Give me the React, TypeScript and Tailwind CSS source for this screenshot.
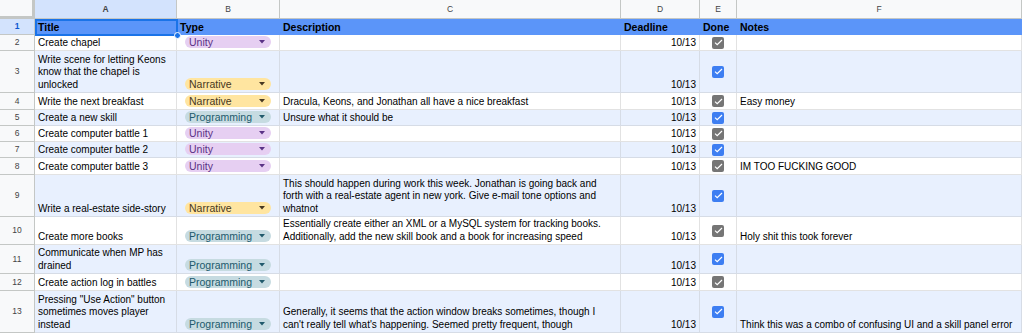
const rows = [
  { n: 2, title: 'Create chapel', type: 'Unity', desc: '', notes: '' },
  { n: 3, title: 'Write scene for letting Keons know that the chapel is unlocked', type: 'Narrative', desc: '', notes: '' },
  { n: 4, title: 'Write the next breakfast', type: 'Narrative', desc: 'Dracula, Keons, and Jonathan all have a nice breakfast', notes: 'Easy money' },
  { n: 5, title: 'Create a new skill', type: 'Programming', desc: 'Unsure what it should be', notes: '' },
  { n: 6, title: 'Create computer battle 1', type: 'Unity', desc: '', notes: '' },
  { n: 7, title: 'Create computer battle 2', type: 'Unity', desc: '', notes: '' },
  { n: 8, title: 'Create computer battle 3', type: 'Unity', desc: '', notes: 'IM TOO FUCKING GOOD' },
  {
    n: 9,
    title: 'Write a real-estate side-story',
    type: 'Narrative',
    desc: 'This should happen during work this week. Jonathan is going back and forth with a real-estate agent in new york. Give e-mail tone options and whatnot',
    notes: '',
  },
  {
    n: 10,
    title: 'Create more books',
    type: 'Programming',
    desc: 'Essentially create either an XML or a MySQL system for tracking books. Additionally, add the new skill book and a book for increasing speed',
    notes: 'Holy shit this took forever',
  },
  { n: 11, title: 'Communicate when MP has drained', type: 'Programming', desc: '', notes: '' },
  { n: 12, title: 'Create action log in battles', type: 'Programming', desc: '', notes: '' },
  {
    n: 13,
    title: 'Pressing "Use Action" button sometimes moves player instead',
    type: 'Programming',
    desc: "Generally, it seems that the action window breaks sometimes, though I can't really tell what's happening. Seemed pretty frequent, though",
    notes: 'Think this was a combo of confusing UI and a skill panel error',
  },
]

const chipStyles: Record<string, string> = {
  Unity: 'bg-[#e6cff2] text-[#5a3286]',
  Narrative: 'bg-[#ffe5a0] text-[#473821]',
  Programming: 'bg-[#c6dbe1] text-[#215a6c]',
}

function Chip({ type }: { type: string }) {
  return (
    <div className={`flex items-center justify-between h-[12px] rounded-full mx-[8px] mb-[2px] pl-[4px] pr-[6px] ${chipStyles[type]}`}>
      <span className="leading-[12px] text-[10.5px]">{type}</span>
      <svg width="6" height="4" viewBox="0 0 6 4" className="shrink-0">
        <path d="M0 0h6L3 3.5z" fill="currentColor" />
      </svg>
    </div>
  )
}

function Check({ blue }: { blue: boolean }) {
  return (
    <div className={`w-[12px] h-[12px] rounded-[2px] flex items-center justify-center ${blue ? 'bg-[#3d7ef2]' : 'bg-[#757575]'}`}>
      <svg width="9" height="7" viewBox="0 0 9 7">
        <path d="M1 3.6l2.2 2.1L8 1" fill="none" stroke="white" strokeWidth="1.2" />
      </svg>
    </div>
  )
}

export default function App() {
  const cell = 'border-r border-b overflow-hidden px-[3px] flex flex-col justify-end pb-[1px]'
  const chipCell = 'border-r border-b overflow-hidden flex flex-col justify-end'
  const letter = 'border-r border-b border-[#c4c7c5] flex items-center justify-center text-[8.5px] text-[#444]'

  return (
    <div
      className="relative w-[1022px] h-[333px] overflow-hidden bg-white text-[10px] leading-[12.5px] text-black"
      style={{ fontFamily: '"Liberation Sans", Arial, sans-serif' }}
    >
      <div className="grid grid-cols-[35px_142px_103px_341px_79px_37px_285px] grid-rows-[19px_16px_16px_42px_17px_16px_16px_16px_17px_42px_28px_29px_17px_42px]">
        {/* column letters */}
        <div className="bg-[#f8f9fa] border-r-[3px] border-b-[3px] border-[#c4c7c5]" />
        <div className={`${letter} bg-[#d3e3fd] text-[#0b57d0] font-bold`}>A</div>
        <div className={`${letter} bg-[#f8f9fa]`}>B</div>
        <div className={`${letter} bg-[#f8f9fa]`}>C</div>
        <div className={`${letter} bg-[#f8f9fa]`}>D</div>
        <div className={`${letter} bg-[#f8f9fa]`}>E</div>
        <div className={`${letter} bg-[#f8f9fa]`}>F</div>

        {/* header row */}
        <div className="bg-[#d3e3fd] border-r border-b border-[#c4c7c5] flex items-center justify-center text-[8.5px] font-bold text-[#0b57d0]">1</div>
        {['Title', 'Type', 'Description', 'Deadline', 'Done', 'Notes'].map((h) => (
          <div key={h} className="bg-[#5b95f9] border-r border-b border-[#5b95f9] px-[3px] font-bold text-[10.5px] flex items-end pb-[1px]">
            {h}
          </div>
        ))}

        {rows.map((r, i) => {
          const alt = i % 2 === 1
          const bg = alt ? 'bg-[#e8f0fe] border-[#d6dce6]' : 'bg-white border-[#e2e2e2]'
          return [
            <div key={`n${r.n}`} className="bg-[#f8f9fa] border-r border-b border-[#c4c7c5] flex items-center justify-center text-[8.5px] text-[#444]">
              {r.n}
            </div>,
            <div key={`a${r.n}`} className={`${cell} ${bg}`}>
              {r.title}
            </div>,
            <div key={`b${r.n}`} className={`${chipCell} ${bg}`}>
              <Chip type={r.type} />
            </div>,
            <div key={`c${r.n}`} className={`${cell} ${bg}`}>
              {r.desc}
            </div>,
            <div key={`d${r.n}`} className={`${cell} ${bg} text-right`}>
              10/13
            </div>,
            <div key={`e${r.n}`} className={`border-r border-b flex items-center justify-center ${bg}`}>
              <Check blue={alt} />
            </div>,
            <div key={`f${r.n}`} className={`${cell} ${bg}`}>
              {r.notes}
            </div>,
          ]
        })}
      </div>

      {/* A1 selection */}
      <div className="absolute left-[35px] top-[19px] w-[143px] h-[17px] border-2 border-[#1a73e8] pointer-events-none" />
      <div className="absolute left-[174px] top-[32px] w-[7px] h-[7px] rounded-full bg-[#1a73e8] border border-white" />
    </div>
  )
}
